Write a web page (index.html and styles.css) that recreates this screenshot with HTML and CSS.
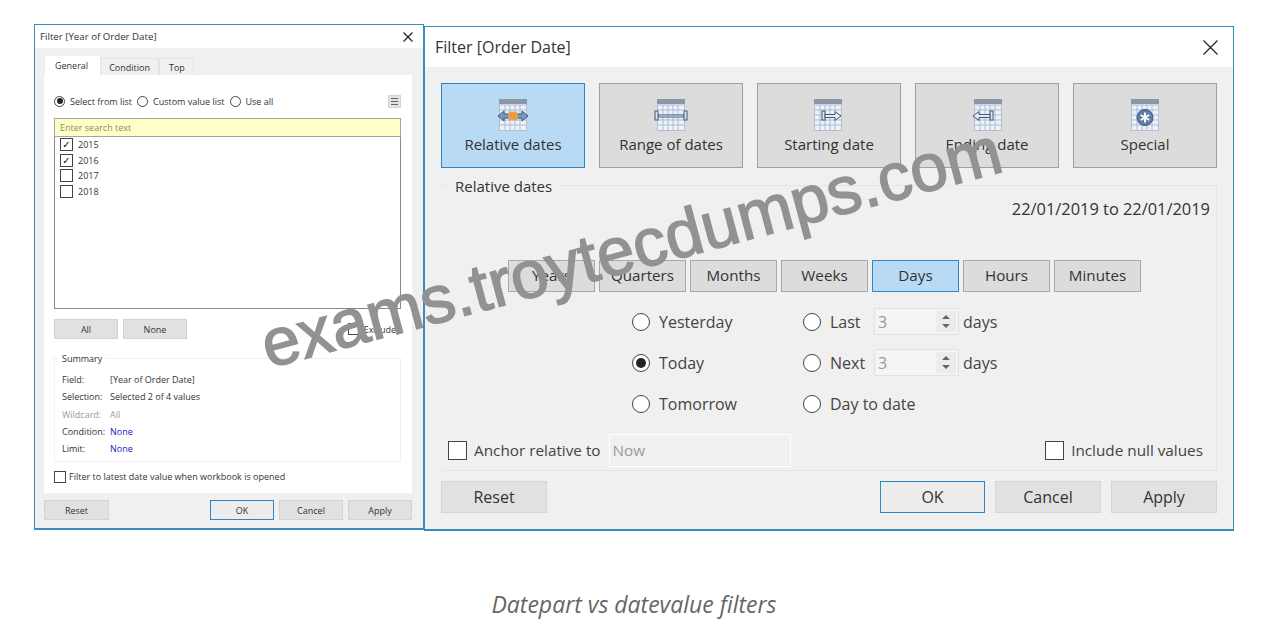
FILE: index.html
```html
<!DOCTYPE html>
<html lang="en">
<head>
    <meta charset="UTF-8">
    <title>Datepart vs datevalue filters</title>
    <link rel="stylesheet" href="styles.css">
</head>
<body>
    <div class="shot">
        <div class="dialogs">
            <!-- Filter on year -->
            <div class="win small">
                <div class="win-title">
                    <span>Filter [Year of Order Date]</span>
                    <svg class="close" width="10" height="10" viewBox="0 0 10 10"><path d="M.5.5l9 9M9.500.5l-9 9"/></svg>
                </div>
                <div class="win-body">
                    <div class="tabs">
                        <div class="tab on">General</div>
                        <div class="tab">Condition</div>
                        <div class="tab">Top</div>
                    </div>
                    <div class="tab-page">
                        <div class="mode-row">
                            <span class="radio sel"></span><span>Select from list</span>
                            <span class="radio"></span><span>Custom value list</span>
                            <span class="radio"></span><span>Use all</span>
                            <span class="menu-btn"><svg width="7" height="7" viewBox="0 0 7 7"><path d="M0 .5h7M0 3.500h7M0 6.500h7" stroke="#666"/></svg></span>
                        </div>
                        <div class="search">Enter search text</div>
                        <div class="list">
                            <div class="list-item"><span class="check on">&#x2713;</span>2015</div>
                            <div class="list-item"><span class="check on">&#x2713;</span>2016</div>
                            <div class="list-item"><span class="check"></span>2017</div>
                            <div class="list-item"><span class="check"></span>2018</div>
                        </div>
                        <div class="list-btns">
                            <div class="btn all">All</div>
                            <div class="btn all">None</div>
                            <div class="exclude"><span class="check"></span>Exclude</div>
                        </div>
                        <div class="summary">
                            <div class="summary-title">Summary</div>
                            <div class="sum-row"><span>Field:</span><span>[Year of Order Date]</span></div>
                            <div class="sum-row"><span>Selection:</span><span>Selected 2 of 4 values</span></div>
                            <div class="sum-row off"><span>Wildcard:</span><span>All</span></div>
                            <div class="sum-row"><span>Condition:</span><span class="blue">None</span></div>
                            <div class="sum-row"><span>Limit:</span><span class="blue">None</span></div>
                        </div>
                        <div class="latest"><span class="check"></span>Filter to latest date value when workbook is opened</div>
                    </div>
                    <div class="foot">
                        <div class="btn">Reset</div>
                        <div class="foot-right">
                            <div class="btn ok">OK</div>
                            <div class="btn">Cancel</div>
                            <div class="btn">Apply</div>
                        </div>
                    </div>
                </div>
            </div>

            <!-- Filter on date -->
            <div class="win big">
                <div class="win-title">
                    <span>Filter [Order Date]</span>
                    <svg class="close" width="15" height="15" viewBox="0 0 15 15"><path d="M.5.5l14 14M14.500.5l-14 14"/></svg>
                </div>
                <div class="win-body">
                    <div class="modes">
                        <div class="mode on">
                            <svg width="32" height="34" viewBox="0 0 32 34"><use href="#cal"/><path d="M1 18l6-5v3h18v-3l6 5-6 5v-3H7v3z" fill="#7d98bd" stroke="#3f5778"/><rect x="12" y="14" width="8" height="8" fill="#f0983a" stroke="#e0b070"/></svg>
                            <span>Relative dates</span>
                        </div>
                        <div class="mode">
                            <svg width="34" height="34" viewBox="0 0 34 34"><use href="#cal" x="1"/><path d="M4 17h26v2H4z" fill="#fff" stroke="#3f5778"/><rect x="1" y="13" width="3" height="9" fill="#dde6f2" stroke="#3f5778"/><rect x="30" y="13" width="3" height="9" fill="#dde6f2" stroke="#3f5778"/></svg>
                            <span>Range of dates</span>
                        </div>
                        <div class="mode">
                            <svg width="34" height="34" viewBox="0 0 34 34"><use href="#cal"/><rect x="10" y="13" width="3" height="9" fill="#dde6f2" stroke="#3f5778"/><path d="M13 16.500h10v-3l6 4.500-6 4.500v-3H13z" fill="#e8eef6" stroke="#3f5778"/></svg>
                            <span>Starting date</span>
                        </div>
                        <div class="mode">
                            <svg width="34" height="34" viewBox="0 0 34 34"><use href="#cal" x="2"/><rect x="20" y="13" width="3" height="9" fill="#dde6f2" stroke="#3f5778"/><path d="M20 16.500H9v-3l-6 4.500 6 4.500v-3h11z" fill="#e8eef6" stroke="#3f5778"/></svg>
                            <span>Ending date</span>
                        </div>
                        <div class="mode">
                            <svg width="32" height="34" viewBox="0 0 32 34"><use href="#cal"/><circle cx="16" cy="19.500" r="8" fill="#5f7fa8" stroke="#3f5778"/><path d="M16 14.500v10M11.700 17l8.600 5M11.700 22l8.600-5" stroke="#fff" stroke-width="2"/></svg>
                            <span>Special</span>
                        </div>
                    </div>

                    <div class="rel-box">
                        <div class="rel-title">Relative dates</div>
                        <div class="range">22/01/2019 to 22/01/2019</div>
                        <div class="units">
                            <div class="unit">Years</div>
                            <div class="unit">Quarters</div>
                            <div class="unit">Months</div>
                            <div class="unit">Weeks</div>
                            <div class="unit on">Days</div>
                            <div class="unit">Hours</div>
                            <div class="unit">Minutes</div>
                        </div>
                        <div class="choices">
                            <div class="choice-col">
                                <div class="choice"><span class="radio"></span>Yesterday</div>
                                <div class="choice"><span class="radio sel"></span>Today</div>
                                <div class="choice"><span class="radio"></span>Tomorrow</div>
                            </div>
                            <div class="choice-col">
                                <div class="choice"><span class="radio"></span><span class="lbl">Last</span><span class="spin"><i>3</i><b></b></span>days</div>
                                <div class="choice"><span class="radio"></span><span class="lbl">Next</span><span class="spin"><i>3</i><b></b></span>days</div>
                                <div class="choice"><span class="radio"></span>Day to date</div>
                            </div>
                        </div>
                        <div class="anchor-row">
                            <span class="check"></span><span>Anchor relative to</span>
                            <span class="now">Now</span>
                            <span class="nulls"><span class="check"></span>Include null values</span>
                        </div>
                    </div>

                    <div class="foot">
                        <div class="btn">Reset</div>
                        <div class="foot-right">
                            <div class="btn ok">OK</div>
                            <div class="btn">Cancel</div>
                            <div class="btn">Apply</div>
                        </div>
                    </div>
                </div>
            </div>
        </div>
        <div class="caption">Datepart vs datevalue filters</div>
        <div class="watermark">exams.troytecdumps.com</div>
    </div>

    <svg class="defs" width="0" height="0">
        <symbol id="cal" viewBox="0 0 32 34" width="32" height="34" overflow="visible">
            <rect x="2.500" y="1.500" width="27" height="31" fill="#eef2f8" stroke="#b5bfcd"/>
            <rect x="2" y="1" width="28" height="5" fill="#8b97a6"/>
            <path d="M3 7h26M3 12h26M3 17h26M3 22h26M3 27h26M8 7v25M13 7v25M18 7v25M23 7v25" stroke="#a9bbd6" fill="none"/>
        </symbol>
    </svg>
</body>
</html>
```

FILE: styles.css
```css
body {
    margin: 0;
    background-color: #fff;
    font-family: "Open Sans", sans-serif;
    color: #333;
}

.shot {
    position: relative;
    width: 1270px;
    height: 641px;
    overflow: hidden;
}

.dialogs {
    display: flex;
    align-items: flex-start;
    padding: 24px 0 0 34px;
}

.defs {
    position: absolute;
}

.win {
    box-sizing: border-box;
    border: 1px solid #3a8cc0;
    border-bottom-width: 2px;
    display: flex;
    flex-direction: column;
    background-color: #f0f0f0;
}

.win.small {
    width: 390px;
    height: 506px;
    font-size: 9px;
}

.win.big {
    width: 810px;
    height: 505px;
    margin-top: 2px;
    font-size: 16px;
}

.win-title {
    display: flex;
    justify-content: space-between;
    align-items: center;
    background-color: #fff;
}

.small .win-title {
    height: 23px;
    padding: 0 10px 0 5px;
    font-size: 9.700px;
}

.big .win-title {
    height: 40px;
    padding: 0 15px 0 10px;
}

.close path {
    fill: none;
    stroke: #222;
    stroke-width: 1.200;
}

.win-body {
    flex: 1;
    display: flex;
    flex-direction: column;
}

.small .win-body {
    padding: 9px 11px 0 9px;
}

.big .win-body {
    padding: 16px 16px 0;
}

/* small dialog */
.tabs {
    display: flex;
    height: 18px;
    padding-left: 1px;
    align-items: flex-end;
}

.tab {
    padding: 0 8px;
    height: 16px;
    line-height: 18px;
    background-color: #f0f0f0;
    border: 1px solid #e4e4e4;
    border-bottom: none;
}

.tab.on {
    height: 18px;
    line-height: 18px;
    padding: 0 11px 0 9px;
    background-color: #fff;
    border-color: #fff;
}

.tab:last-child {
    padding: 0 8px 0 9px;
}

.tab-page {
    background-color: #fff;
    height: 418px;
    box-sizing: border-box;
    padding: 0 10px;
}

.mode-row {
    display: flex;
    align-items: center;
    height: 16px;
    margin-top: 18px;
    gap: 5px;
}

.mode-row .radio {
    width: 11px;
    height: 11px;
    border-width: 1px;
}

.mode-row .radio.sel::after {
    width: 6px;
    height: 6px;
}

.menu-btn {
    box-sizing: border-box;
    display: flex;
    align-items: center;
    justify-content: center;
    margin-left: auto;
    margin-right: 1px;
    width: 13px;
    height: 13px;
    background-color: #e1e1e1;
    border: 1px solid #d4d4d4;
}

.search {
    margin-top: 9px;
    margin-right: 1px;
    box-sizing: border-box;
    height: 19px;
    line-height: 17px;
    padding-left: 5px;
    background-color: #ffffc8;
    border: 1px solid #a5a5a5;
    color: #8a8a70;
}

.list {
    box-sizing: border-box;
    height: 172px;
    margin-right: 1px;
    border: 1px solid #8a8a8a;
    border-top: none;
    padding: 0 0 0 5px;
}

.list-item {
    display: flex;
    align-items: center;
    height: 15.500px;
    gap: 5px;
}

.check {
    box-sizing: border-box;
    flex: none;
    display: inline-block;
    width: 12px;
    height: 12px;
    line-height: 11px;
    border: 1px solid #444;
    background-color: #fff;
    text-align: center;
    font-family: "DejaVu Sans", sans-serif;
    font-size: 10px;
    color: #111;
}

.list .check {
    width: 13px;
    height: 13px;
    line-height: 12px;
}

.list-btns {
    display: flex;
    align-items: center;
    gap: 5px;
    margin-top: 10px;
}

.exclude {
    margin-left: auto;
    margin-right: 6px;
    display: flex;
    align-items: center;
    gap: 4px;
}

.summary {
    position: relative;
    box-sizing: border-box;
    margin-top: 19px;
    margin-right: 1px;
    height: 104px;
    border: 1px solid #f0f0f0;
    padding: 12px 7px 0;
}

.summary-title {
    position: absolute;
    top: -6px;
    left: 4px;
    padding: 0 3px;
    line-height: 12px;
    background-color: #fff;
}

.sum-row {
    display: flex;
    height: 17.250px;
    line-height: 17px;
}

.sum-row span:first-child {
    width: 48px;
}

.sum-row.off {
    color: #9a9a9a;
}

.blue {
    color: #1a1ac0;
}

.latest {
    display: flex;
    align-items: center;
    gap: 3px;
    margin-top: 8px;
}

/* buttons */
.btn {
    box-sizing: border-box;
    display: flex;
    align-items: center;
    justify-content: center;
    background-color: #e1e1e1;
    border: 1px solid #d4d4d4;
}

.small .btn {
    width: 64px;
    height: 20px;
}

.small .foot > .btn {
    width: 65px;
}

.big .btn {
    width: 106px;
    height: 32px;
}

.big .btn.ok {
    width: 105px;
}

.btn.ok {
    border: 1px solid #2f86c4;
    background-color: #ececec;
}

.foot {
    display: flex;
    justify-content: space-between;
}

.foot-right {
    display: flex;
}

.small .foot {
    margin-top: 7px;
}

.small .foot-right {
    gap: 5px;
}

.big .foot {
    margin-top: 10px;
}

.big .foot-right {
    gap: 10px;
}

/* big dialog */
.modes {
    display: flex;
    justify-content: space-between;
}

.mode {
    box-sizing: border-box;
    width: 144px;
    height: 85px;
    display: flex;
    flex-direction: column;
    align-items: center;
    padding-top: 14px;
    background-color: #dcdcdc;
    border: 1px solid #a0a0a0;
}

.mode span {
    margin-top: 1px;
    line-height: 22px;
    font-size: 15px;
}

.mode.on {
    background-color: #b9daf5;
    border: 1px solid #2f86c4;
}

.rel-box {
    position: relative;
    box-sizing: border-box;
    height: 286px;
    margin-top: 17px;
    border: 1px solid #e6e6e6;
    border-width: 1px 1px 1px 0;
    padding: 0 6px 0 5px;
}

.rel-title {
    position: absolute;
    top: -10px;
    left: 7px;
    padding: 0 7px;
    background-color: #f0f0f0;
    line-height: 20px;
    font-size: 15px;
}

.range {
    text-align: right;
    margin-top: 12px;
    line-height: 22px;
    font-size: 16.400px;
}

.units {
    display: flex;
    gap: 4px;
    margin: 40px 0 0 62px;
}

.unit {
    box-sizing: border-box;
    width: 87px;
    height: 32px;
    line-height: 29px;
    text-align: center;
    font-size: 15.200px;
    background-color: #dcdcdc;
    border: 1px solid #a8a8a8;
}

.unit.on {
    background-color: #b9daf5;
    border-color: #2f86c4;
}

.choices {
    display: flex;
    margin: 9px 0 0 186px;
    gap: 66px;
    color: #444;
}

.choice-col {
    display: flex;
    flex-direction: column;
}

.choice {
    display: flex;
    align-items: center;
    height: 41px;
}

.radio {
    position: relative;
    box-sizing: border-box;
    flex: none;
    display: inline-block;
    width: 18px;
    height: 18px;
    border: 1.500px solid #444;
    border-radius: 50%;
    background-color: #fff;
}

.choice .radio {
    margin-right: 9px;
}

.radio.sel::after {
    content: "";
    position: absolute;
    top: 50%;
    left: 50%;
    width: 10px;
    height: 10px;
    transform: translate(-50%, -50%);
    border-radius: 50%;
    background-color: #222;
}

.lbl {
    width: 44px;
}

.spin {
    box-sizing: border-box;
    display: flex;
    align-items: center;
    justify-content: space-between;
    width: 85px;
    height: 27px;
    margin-right: 4px;
    padding: 0 2px 0 3px;
    border: 1px solid #e2e2e2;
    background-color: #f4f4f4;
    color: #999;
}

.spin i {
    font-style: normal;
}

.spin b {
    position: relative;
    width: 20px;
    height: 21px;
    background-color: #ececec;
}

.spin b::before,
.spin b::after {
    content: "";
    position: absolute;
    left: 6px;
    border-left: 4px solid transparent;
    border-right: 4px solid transparent;
}

.spin b::before {
    top: 4px;
    border-bottom: 4px solid #666;
}

.spin b::after {
    bottom: 4px;
    border-top: 4px solid #666;
}

.anchor-row {
    display: flex;
    align-items: center;
    margin-top: 8px;
    height: 36px;
    font-size: 15.300px;
    color: #444;
}

.anchor-row .check {
    width: 19px;
    height: 19px;
    margin-right: 7px;
}

.anchor-row > .check {
    margin-left: 2px;
}

.now {
    box-sizing: border-box;
    width: 182px;
    height: 33px;
    line-height: 31px;
    margin-left: 8px;
    padding-left: 3px;
    border: 1px solid #fff;
    color: #999;
}

.nulls {
    margin-left: auto;
    margin-right: 7px;
    display: flex;
    align-items: center;
}

/* overlay */
.caption {
    position: absolute;
    left: 0;
    top: 588px;
    width: 1268px;
    text-align: center;
    font-size: 23px;
    font-style: italic;
    color: #666;
}

.watermark {
    position: absolute;
    left: 271px;
    top: 311px;
    font-family: "Liberation Sans", sans-serif;
    font-size: 67px;
    line-height: 67px;
    color: #929292;
    -webkit-text-stroke: 1.500px #929292;
    white-space: nowrap;
    transform: rotate(-15deg);
    transform-origin: 0 100%;
}
```
